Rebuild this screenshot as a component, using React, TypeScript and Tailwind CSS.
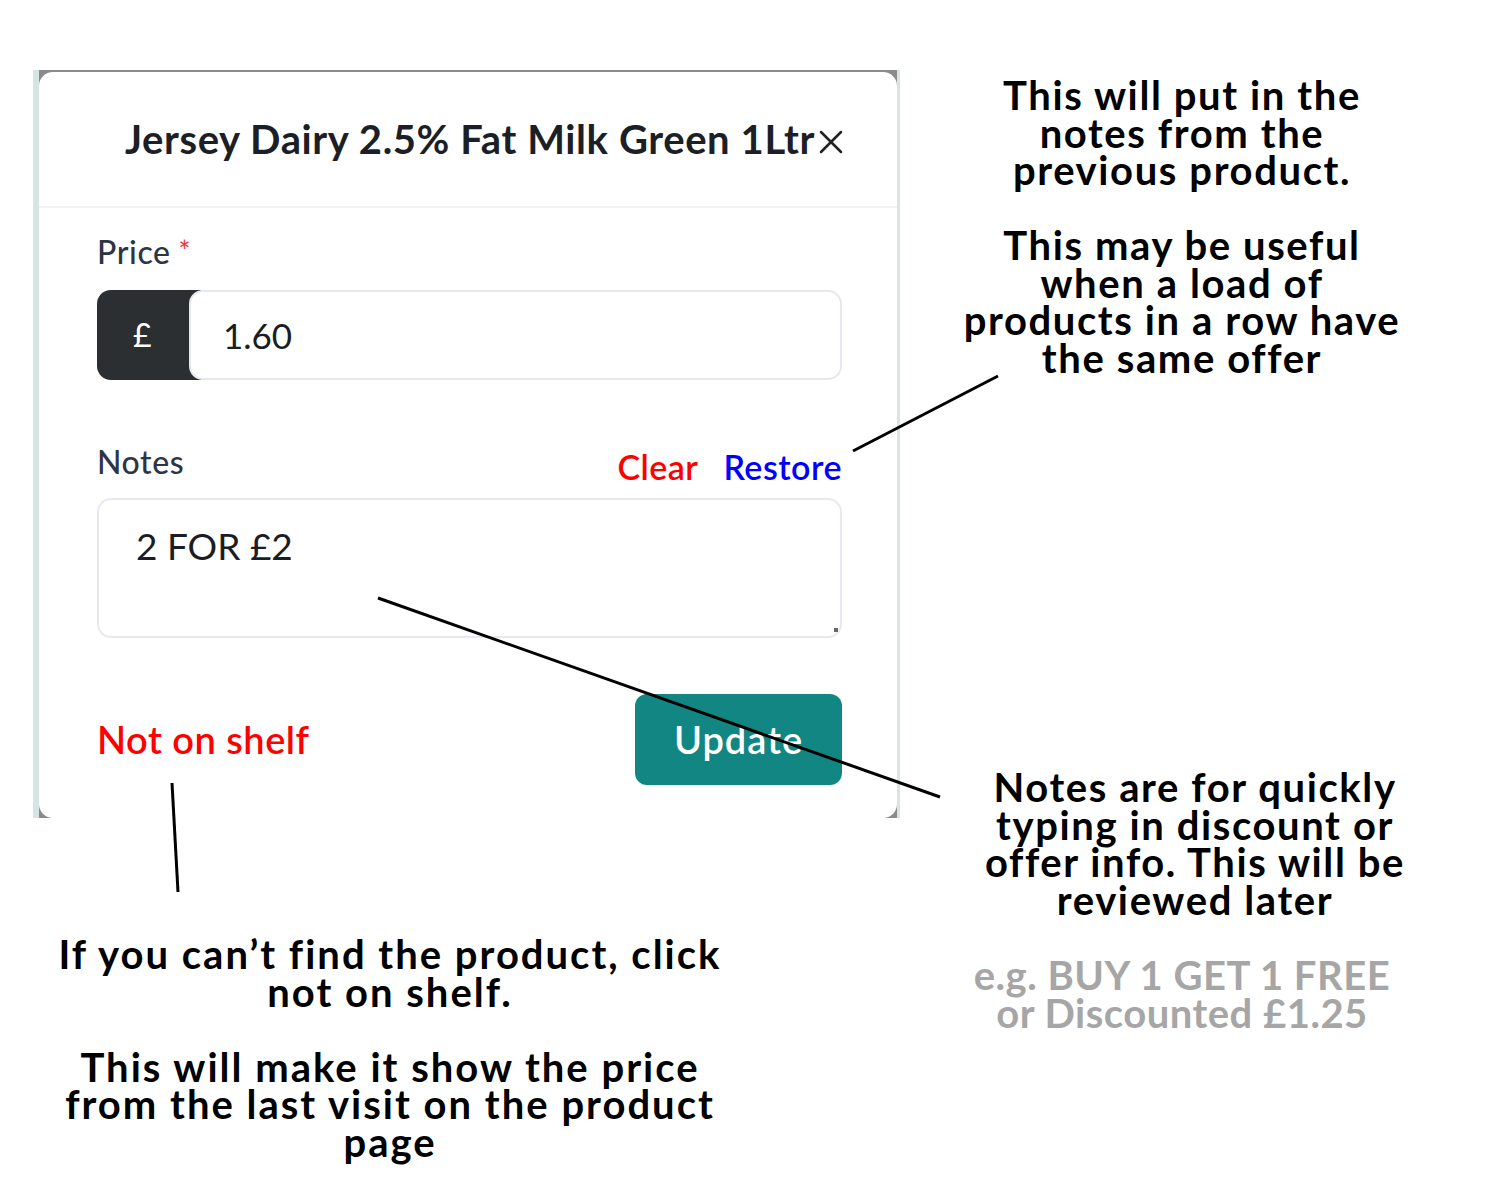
import { X } from 'lucide-react'

const note = "font-['Lato',sans-serif] font-bold text-[40px] leading-[37.5px] text-center"

function ProductCard() {
  return (
    <div className="ml-[33px] flex h-[748px] w-[867px] bg-[#d6e4e4] pl-[6px] pr-[3px]">
      <div className="flex-1 overflow-hidden bg-[#8a8a8a] pt-[2px]">
        <div className="flex h-full flex-col rounded-[14px] bg-white font-['Lato',sans-serif]">
          {/* Header */}
          <div className="flex h-[136px] items-center border-b-2 border-[#f1f3f4] pl-[86px]">
            <h2 className="text-[40px] font-bold tracking-[0.6px] text-[#1c1f26]">
              Jersey Dairy 2.5% Fat Milk Green 1Ltr
            </h2>
            <X className="-ml-[4px] mt-[6px] h-[40px] w-[40px] text-[#222]" strokeWidth={1.5} />
          </div>

          {/* Body */}
          <div className="flex flex-col pl-[58px] pr-[55px] pt-[24px]">
            <div className="flex h-[40px] items-center text-[32px] font-medium tracking-[0.6px] text-[#2d3545]">
              Price<span className="ml-[8px] mt-[-4px] text-[28px] text-[#e53e3e]">*</span>
            </div>

            <div className="mt-[18px] flex h-[90px]">
              <div className="flex w-[104px] items-center rounded-l-[14px] bg-[#2b2f31] pl-[36px] text-[32px] text-white">
                £
              </div>
              <div className="-ml-[12px] flex flex-1 items-center rounded-[14px] border-2 border-[#e5e9ef] bg-white pl-[32px] text-[35px] text-[#1a1d23]">
                1.60
              </div>
            </div>

            <div className="mt-[62px] flex h-[40px] items-center justify-between">
              <span className="text-[32px] font-medium tracking-[0.6px] text-[#2d3545]">Notes</span>
              <div className="mt-[8px] flex gap-[25px] text-[34px] font-semibold tracking-[0.5px]">
                <span className="text-[#ff0000]">Clear</span>
                <span className="text-[#0000ff]">Restore</span>
              </div>
            </div>

            <div className="relative mt-[16px] h-[140px] rounded-[14px] border-2 border-[#e6eaf0] pl-[37px] pt-[18px] text-[37px] text-[#1a1d23]">
              2 FOR £2
              <div className="absolute bottom-[4px] right-[2px] h-[4px] w-[4px] bg-[#666]" />
            </div>

            <div className="mt-[56px] flex h-[91px] items-center justify-between">
              <span className="text-[38px] font-semibold tracking-[0.5px] text-[#ff0000]">Not on shelf</span>
              <button className="h-[91px] w-[207px] rounded-[12px] bg-[#128682] text-[38px] font-semibold tracking-[1px] text-white">
                Update
              </button>
            </div>
          </div>
        </div>
      </div>
    </div>
  )
}

export default function App() {
  return (
    <div className="relative flex h-[1192px] w-[1490px] overflow-hidden bg-white">
      {/* Left: screenshot + hint */}
      <div className="flex w-[900px] flex-col pt-[70px]">
        <ProductCard />
        <div className={`${note} mt-[118px] w-[780px] tracking-[2px] text-black`}>
          <p>If you can’t find the product, click</p>
          <p>not on shelf.</p>
          <p>&nbsp;</p>
          <p>This will make it show the price</p>
          <p>from the last visit on the product</p>
          <p>page</p>
        </div>
      </div>

      {/* Right: annotations */}
      <div className="flex flex-1 flex-col pt-[77px]">
        <div className={`${note} pr-[26px] tracking-[1.6px] text-black`}>
          <p>This will put in the</p>
          <p>notes from the</p>
          <p>previous product.</p>
          <p>&nbsp;</p>
          <p>This may be useful</p>
          <p>when a load of</p>
          <p>products in a row have</p>
          <p>the same offer</p>
        </div>
        <div className={`${note} mt-[392px] tracking-[1.6px] text-black`}>
          <p>Notes are for quickly</p>
          <p>typing in discount or</p>
          <p>offer info. This will be</p>
          <p>reviewed later</p>
        </div>
        <div className={`${note} mt-[38px] pr-[26px] tracking-[0.5px] text-[#a6a6a6]`}>
          <p>e.g. BUY 1 GET 1 FREE</p>
          <p>or Discounted £1.25</p>
        </div>
      </div>

      {/* pointer lines */}
      <svg className="pointer-events-none absolute inset-0" width="1490" height="1192">
        <g stroke="#000" strokeWidth="3" strokeLinecap="butt">
          <line x1="853" y1="451" x2="998" y2="376" />
          <line x1="378" y1="598" x2="940" y2="797" />
          <line x1="172" y1="783" x2="178" y2="892" />
        </g>
      </svg>
    </div>
  )
}
